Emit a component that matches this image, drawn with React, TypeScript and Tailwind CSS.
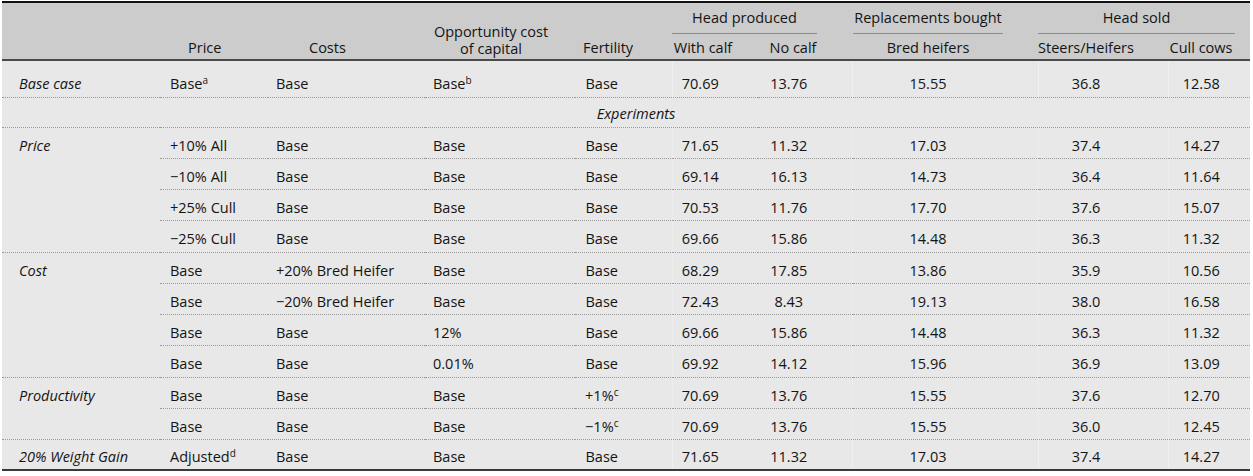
import React from 'react'

type Row = {
  label?: string
  price: React.ReactNode
  costs: string
  opp: string
  fert: React.ReactNode
  withCalf: string
  noCalf: string
  bred: string
  steers: string
  cull: string
  tall?: boolean
  last?: boolean
}

const Sup = ({ children }: { children: React.ReactNode }) => (
  <sup className="text-[10px]">{children}</sup>
)

const groups: Row[][] = [
  [
    { label: 'Price', price: '+10% All', costs: 'Base', opp: 'Base', fert: 'Base', withCalf: '71.65', noCalf: '11.32', bred: '17.03', steers: '37.4', cull: '14.27' },
    { price: '\u221210% All', costs: 'Base', opp: 'Base', fert: 'Base', withCalf: '69.14', noCalf: '16.13', bred: '14.73', steers: '36.4', cull: '11.64' },
    { price: '+25% Cull', costs: 'Base', opp: 'Base', fert: 'Base', withCalf: '70.53', noCalf: '11.76', bred: '17.70', steers: '37.6', cull: '15.07' },
    { price: '\u221225% Cull', costs: 'Base', opp: 'Base', fert: 'Base', withCalf: '69.66', noCalf: '15.86', bred: '14.48', steers: '36.3', cull: '11.32', tall: true },
  ],
  [
    { label: 'Cost', price: 'Base', costs: '+20% Bred Heifer', opp: 'Base', fert: 'Base', withCalf: '68.29', noCalf: '17.85', bred: '13.86', steers: '35.9', cull: '10.56' },
    { price: 'Base', costs: '\u221220% Bred Heifer', opp: 'Base', fert: 'Base', withCalf: '72.43', noCalf: '8.43', bred: '19.13', steers: '38.0', cull: '16.58' },
    { price: 'Base', costs: 'Base', opp: '12%', fert: 'Base', withCalf: '69.66', noCalf: '15.86', bred: '14.48', steers: '36.3', cull: '11.32' },
    { price: 'Base', costs: 'Base', opp: '0.01%', fert: 'Base', withCalf: '69.92', noCalf: '14.12', bred: '15.96', steers: '36.9', cull: '13.09', tall: true },
  ],
  [
    { label: 'Productivity', price: 'Base', costs: 'Base', opp: 'Base', fert: <>+1%<Sup>c</Sup></>, withCalf: '70.69', noCalf: '13.76', bred: '15.55', steers: '37.6', cull: '12.70' },
    { price: 'Base', costs: 'Base', opp: 'Base', fert: <>{'\u2212'}1%<Sup>c</Sup></>, withCalf: '70.69', noCalf: '13.76', bred: '15.55', steers: '36.0', cull: '12.45' },
  ],
  [
    { label: '20% Weight Gain', price: <>Adjusted<Sup>d</Sup></>, costs: 'Base', opp: 'Base', fert: 'Base', withCalf: '71.65', noCalf: '11.32', bred: '17.03', steers: '37.4', cull: '14.27', last: true },
  ],
]

function DataRow({ row, groupEnd }: { row: Row; groupEnd: boolean }) {
  const line = row.last ? '' : 'border-b border-dotted border-[#9a9a9a]'
  const first = groupEnd ? line : ''
  const vl = 'border-l border-l-[#f1f1f1]'
  const h = row.tall ? 'h-[32px]' : 'h-[31px]'
  return (
    <tr className={h}>
      <td className={`pt-[6px] pl-[17px] italic ${first}`}>{row.label}</td>
      <td className={`pt-[6px] pl-[10px] ${line}`}>{row.price}</td>
      <td className={`pt-[6px] pl-[8px] ${line}`}>{row.costs}</td>
      <td className={`pt-[6px] pl-[8px] ${line}`}>{row.opp}</td>
      <td className={`pt-[6px] pr-[43px] text-center ${line}`}>{row.fert}</td>
      <td className={`pt-[6px] pr-[30px] text-center ${vl} ${line}`}>{row.withCalf}</td>
      <td className={`pt-[6px] pr-[32px] text-center ${line}`}>{row.noCalf}</td>
      <td className={`pt-[6px] pr-[34px] text-center ${vl} ${line}`}>{row.bred}</td>
      <td className={`pt-[6px] pr-[34px] text-center ${vl} ${line}`}>{row.steers}</td>
      <td className={`pt-[6px] pr-[16px] text-center ${vl} ${line}`}>{row.cull}</td>
    </tr>
  )
}

export default function App() {
  return (
    <div className="h-[476px] w-[1253px] bg-white pt-[1px] pl-[2px]">
      <table
        className="w-[1248px] table-fixed border-collapse bg-[#e8e8e8] text-[14.5px] leading-[20px] text-[#141414]"
        style={{ fontFamily: '"Open Sans", "Noto Sans", sans-serif' }}
      >
        <colgroup>
          <col className="w-[158px]" />
          <col className="w-[108px]" />
          <col className="w-[157px]" />
          <col className="w-[150px]" />
          <col className="w-[97px]" />
          <col className="w-[86px]" />
          <col className="w-[94px]" />
          <col className="w-[186px]" />
          <col className="w-[130px]" />
          <col className="w-[82px]" />
        </colgroup>
        <thead className="border-t-2 border-b-2 border-t-[#111] border-b-[#4a4a4a] bg-[#cccccc] font-normal">
          <tr className="h-[32px]">
            <th rowSpan={2} className="p-0" />
            <th rowSpan={2} className="pb-[1px] pl-[28px] text-left align-bottom font-normal">Price</th>
            <th rowSpan={2} className="pb-[1px] pl-[41px] text-left align-bottom font-normal">Costs</th>
            <th rowSpan={2} className="pb-[1px] pr-[18px] text-center align-bottom font-normal">
              <div className="leading-[16px]">Opportunity cost</div>
              <div className="leading-[18px]">of capital</div>
            </th>
            <th rowSpan={2} className="pb-[1px] pl-[8px] text-left align-bottom font-normal">Fertility</th>
            <th colSpan={2} className="p-0 pr-[35px] align-bottom font-normal">
              <div className="border-b border-[#8c8c8c] pb-[5px] text-center">Head produced</div>
            </th>
            <th className="p-0 pr-[35px] pl-[1px] align-bottom font-normal">
              <div className="border-b border-[#8c8c8c] pb-[5px] text-center">Replacements bought</div>
            </th>
            <th colSpan={2} className="p-0 pr-[15px] align-bottom font-normal">
              <div className="border-b border-[#8c8c8c] pb-[5px] text-center">Head sold</div>
            </th>
          </tr>
          <tr className="h-[26px]">
            <th className="pb-[1px] pr-[24px] text-center align-bottom font-normal">With calf</th>
            <th className="pb-[1px] pr-[24px] text-center align-bottom font-normal">No calf</th>
            <th className="pb-[1px] pr-[34px] text-center align-bottom font-normal">Bred heifers</th>
            <th className="pb-[1px] pr-[34px] text-center align-bottom font-normal">Steers/Heifers</th>
            <th className="pb-[1px] pr-[16px] text-center align-bottom font-normal">Cull cows</th>
          </tr>
        </thead>
        <tbody className="border-b-2 border-b-[#3a3a3a]">
          <tr className="h-[37px] border-b border-dotted border-[#9a9a9a]">
            <td className="pt-[10px] pl-[17px] italic">Base case</td>
            <td className="pt-[10px] pl-[10px]">Base<Sup>a</Sup></td>
            <td className="pt-[10px] pl-[8px]">Base</td>
            <td className="pt-[10px] pl-[8px]">Base<Sup>b</Sup></td>
            <td className="pt-[10px] pr-[43px] text-center">Base</td>
            <td className="pt-[10px] pr-[30px] text-center border-l border-l-[#f1f1f1]">70.69</td>
            <td className="pt-[10px] pr-[32px] text-center">13.76</td>
            <td className="pt-[10px] pr-[34px] text-center border-l border-l-[#f1f1f1]">15.55</td>
            <td className="pt-[10px] pr-[34px] text-center border-l border-l-[#f1f1f1]">36.8</td>
            <td className="pt-[10px] pr-[16px] text-center border-l border-l-[#f1f1f1]">12.58</td>
          </tr>
          <tr className="h-[30px] border-b border-dotted border-[#9a9a9a]">
            <td colSpan={10} className="pt-[3px] pl-[20px] text-center italic">Experiments</td>
          </tr>
          {groups.map((g, gi) =>
            g.map((row, ri) => (
              <DataRow key={`${gi}-${ri}`} row={row} groupEnd={ri === g.length - 1} />
            ))
          )}
        </tbody>
      </table>
    </div>
  )
}
